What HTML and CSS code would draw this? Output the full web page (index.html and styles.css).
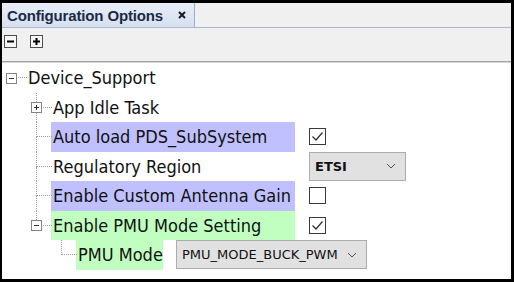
FILE: index.html
```html
<!doctype html>
<html>
  <head>
    <meta charset="utf-8" />
    <meta name="viewport" content="width=device-width, initial-scale=1" />
    <link rel="stylesheet" href="styles.css">
  </head>

  <body>
    <div class="panel">
      <div class="tabs">
        <div class="tab">
          <span class="tab-title">Configuration Options</span>
          <svg class="tab-close" width="8" height="8" viewBox="0 0 8 8">
            <path d="M1 1 L7 7 M7 1 L1 7" stroke="#1c1c1c" stroke-width="2" />
          </svg>
        </div>
      </div>

      <div class="toolbar">
        <span class="tool">
          <svg width="13" height="13" viewBox="0 0 13 13">
            <rect x="0.5" y="0.5" width="12" height="12" fill="#f7f7f7" stroke="#4d4d4d" />
            <path d="M3 6.5 H10" stroke="#000" stroke-width="2" />
          </svg>
        </span>
        <span class="tool">
          <svg width="13" height="13" viewBox="0 0 13 13">
            <rect x="0.5" y="0.5" width="12" height="12" fill="#f7f7f7" stroke="#4d4d4d" />
            <path d="M3 6.5 H10 M6.5 3 V10" stroke="#000" stroke-width="2" />
          </svg>
        </span>
      </div>

      <div class="tree">
        <div class="row">
          <span class="twig root"><span class="up"></span><span class="down"></span><i class="exp"></i></span>
          <span class="label">Device_Support</span>
        </div>

        <div class="row">
          <span class="indent"></span>
          <span class="twig"><span class="up"></span><span class="down"></span><i class="exp plus"></i></span>
          <span class="label">App Idle Task</span>
        </div>

        <div class="row">
          <span class="indent"></span>
          <span class="twig"><span class="up"></span><span class="down"></span></span>
          <span class="label field lavender">Auto load PDS_SubSystem</span>
          <span class="check">
            <svg width="17" height="17" viewBox="0 0 17 17">
              <rect x="0.5" y="0.5" width="16" height="16" fill="#fff" stroke="#3a3a3a" />
              <path d="M3.5 8.5 L7 12 L13.5 4.5" fill="none" stroke="#333" stroke-width="1.3" />
            </svg>
          </span>
        </div>

        <div class="row">
          <span class="indent"></span>
          <span class="twig"><span class="up"></span><span class="down"></span></span>
          <span class="label field">Regulatory Region</span>
          <span class="combo combo-region">
            <span class="combo-value bold">ETSI</span>
            <svg class="chevron" width="10" height="6" viewBox="0 0 10 6">
              <path d="M1 1 L5 5 L9 1" fill="none" stroke="#555" />
            </svg>
          </span>
        </div>

        <div class="row">
          <span class="indent"></span>
          <span class="twig"><span class="up"></span><span class="down"></span></span>
          <span class="label field lavender">Enable Custom Antenna Gain</span>
          <span class="check">
            <svg width="17" height="17" viewBox="0 0 17 17">
              <rect x="0.5" y="0.5" width="16" height="16" fill="#fff" stroke="#3a3a3a" />
            </svg>
          </span>
        </div>

        <div class="row">
          <span class="indent"></span>
          <span class="twig last"><span class="up"></span><span class="down"></span><i class="exp"></i></span>
          <span class="label field mint">Enable PMU Mode Setting</span>
          <span class="check">
            <svg width="17" height="17" viewBox="0 0 17 17">
              <rect x="0.5" y="0.5" width="16" height="16" fill="#fff" stroke="#3a3a3a" />
              <path d="M3.5 8.5 L7 12 L13.5 4.5" fill="none" stroke="#333" stroke-width="1.3" />
            </svg>
          </span>
        </div>

        <div class="row">
          <span class="indent"></span>
          <span class="indent"></span>
          <span class="twig last"><span class="up"></span><span class="down"></span></span>
          <span class="label sub mint">PMU Mode</span>
          <span class="combo combo-pmu">
            <span class="combo-value">PMU_MODE_BUCK_PWM</span>
            <svg class="chevron" width="10" height="6" viewBox="0 0 10 6">
              <path d="M1 1 L5 5 L9 1" fill="none" stroke="#555" />
            </svg>
          </span>
        </div>
      </div>
    </div>
  </body>
</html>
```

FILE: styles.css
```css
body {
  margin: 0;
  font-family: "DejaVu Sans", sans-serif;
}

.panel {
  background: #fff;
  border: 3px solid #000;
  border-left-width: 2px;
  box-sizing: border-box;
  display: flex;
  flex-direction: column;
  height: 282px;
  width: 514px;
}

/* tab strip */

.tabs {
  background: #f0f0f0;
  border-bottom: 1px solid #a9b8cb;
  display: flex;
  height: 24px;
}

.tab {
  align-items: center;
  background: linear-gradient(#e9eef8, #d6e0f0);
  border-right: 1px solid #9fb0c6;
  display: flex;
  width: 192px;
}

.tab-title {
  color: #1b2a44;
  font-family: "Liberation Sans", sans-serif;
  font-size: 15px;
  font-weight: bold;
  letter-spacing: -0.15px;
  margin-left: 5px;
}

.tab-close {
  margin-left: 15px;
}

/* toolbar */

.toolbar {
  background: #f0f0f0;
  border-bottom: 1px solid #a3a3a3;
  box-shadow: 0 1px 0 #d6d6d6;
  box-sizing: border-box;
  display: flex;
  gap: 13px;
  height: 34px;
  padding: 7px 0 0 2px;
}

.tool {
  display: block;
  height: 13px;
}

.tool svg {
  display: block;
}

/* tree */

.tree {
  padding-top: 1px;
}

.row {
  align-items: center;
  display: flex;
  height: 29.5px;
}

.indent {
  align-self: stretch;
  width: 25px;
}

.twig {
  align-self: stretch;
  display: flex;
  flex-direction: column;
  position: relative;
  width: 25px;
}

.twig .up,
.twig .down {
  border-left: 1px dotted #9a9a9a;
  box-sizing: border-box;
  flex: 1;
  margin-left: 9px;
}

.twig .up {
  border-bottom: 1px dotted #9a9a9a;
}

.twig.root .up,
.twig.root .down,
.twig.last .down {
  border-left: none;
}

.twig.root .up {
  margin-left: 10px;
}

.exp {
  background: #fff;
  border: 1px solid #858585;
  height: 9px;
  left: 4px;
  margin-top: -5px;
  position: absolute;
  top: 50%;
  width: 9px;
}

.exp::before {
  background: #333;
  content: "";
  height: 1px;
  left: 2px;
  position: absolute;
  top: 4px;
  width: 5px;
}

.exp.plus::after {
  background: #333;
  content: "";
  height: 5px;
  left: 4px;
  position: absolute;
  top: 2px;
  width: 1px;
}

.label {
  align-items: center;
  align-self: stretch;
  box-sizing: border-box;
  color: #111;
  display: flex;
  font-family: "DejaVu Sans Condensed", "DejaVu Sans", sans-serif;
  font-size: 18px;
  font-stretch: condensed;
  margin-left: -1px;
  padding: 0 2px;
  white-space: nowrap;
}

.label.field {
  width: 244px;
}

.label.sub {
  width: 87px;
}

.lavender {
  background: #c0c0ff;
}

.mint {
  background: #c0ffc0;
}

.check {
  margin-left: 14px;
}

.check svg {
  display: block;
}

.combo {
  align-items: center;
  background: #e1e1e1;
  border: 1px solid #adadad;
  box-sizing: border-box;
  color: #111;
  display: flex;
  font-size: 13px;
  height: 29px;
  justify-content: space-between;
  padding: 0 9px 0 5px;
}

.combo-region {
  margin-left: 14px;
  width: 97px;
}

.combo-pmu {
  margin-left: 13px;
  width: 191px;
}

.combo-value.bold {
  font-weight: bold;
}
```
